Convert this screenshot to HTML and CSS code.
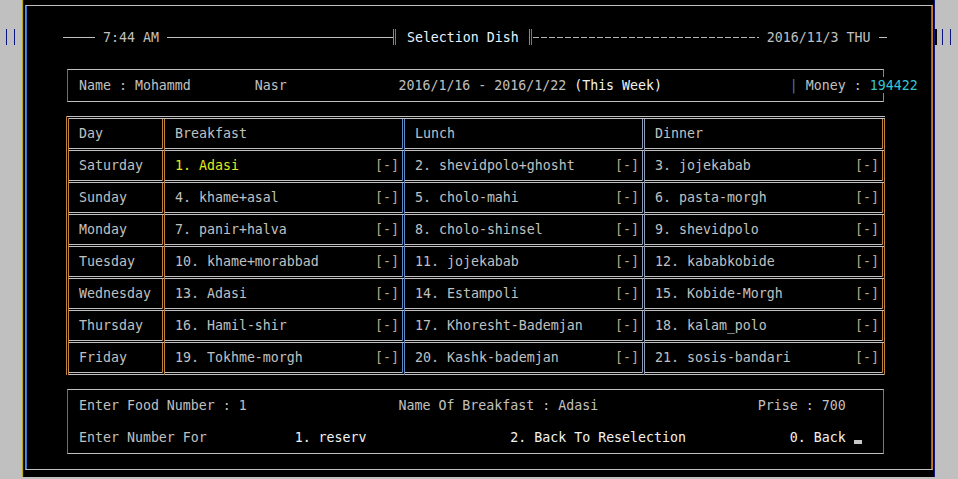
FILE: index.html
```html
<!DOCTYPE html>
<html>
<head>
<meta charset="utf-8">
<title>Selection Dish</title>
<link rel="stylesheet" href="styles.css">
</head>
<body>
<div class="screen">
  <div class="gutter gutter-left"><i class="mark"></i><i class="mark"></i></div>
  <div class="console">
    <div class="frame">
      <div class="title-row">
        <span class="rule w32"></span>
        <span class="t time">7:44 AM</span>
        <span class="rule w226"></span>
        <span class="dbl"></span>
        <span class="t title">Selection Dish</span>
        <span class="dbl dbl-right"></span>
        <span class="dash"></span>
        <span class="t date">2016/11/3 THU</span>
        <span class="rule w8"></span>
      </div>
      <div class="namebox"><div class="line">Name : Mohammd        Nasr              2016/1/16 - 2016/1/22 <span class="hi">(This Week)</span>                <span class="bar">|</span> Money : <span class="money">194422</span></div></div>
      <div class="menu">
        <div class="cell c-day">Day</div>
        <div class="cell c-b">Breakfast</div>
        <div class="cell c-l">Lunch</div>
        <div class="cell c-d">Dinner</div>

        <div class="cell c-day">Saturday</div>
        <div class="cell c-b"><span class="sel">1. Adasi</span><span class="mk">[-]</span></div>
        <div class="cell c-l"><span>2. shevidpolo+ghosht</span><span class="mk">[-]</span></div>
        <div class="cell c-d"><span>3. jojekabab</span><span class="mk">[-]</span></div>

        <div class="cell c-day">Sunday</div>
        <div class="cell c-b"><span>4. khame+asal</span><span class="mk">[-]</span></div>
        <div class="cell c-l"><span>5. cholo-mahi</span><span class="mk">[-]</span></div>
        <div class="cell c-d"><span>6. pasta-morgh</span><span class="mk">[-]</span></div>

        <div class="cell c-day">Monday</div>
        <div class="cell c-b"><span>7. panir+halva</span><span class="mk">[-]</span></div>
        <div class="cell c-l"><span>8. cholo-shinsel</span><span class="mk">[-]</span></div>
        <div class="cell c-d"><span>9. shevidpolo</span><span class="mk">[-]</span></div>

        <div class="cell c-day">Tuesday</div>
        <div class="cell c-b"><span>10. khame+morabbad</span><span class="mk">[-]</span></div>
        <div class="cell c-l"><span>11. jojekabab</span><span class="mk">[-]</span></div>
        <div class="cell c-d"><span>12. kababkobide</span><span class="mk">[-]</span></div>

        <div class="cell c-day">Wednesday</div>
        <div class="cell c-b"><span>13. Adasi</span><span class="mk">[-]</span></div>
        <div class="cell c-l"><span>14. Estampoli</span><span class="mk">[-]</span></div>
        <div class="cell c-d"><span>15. Kobide-Morgh</span><span class="mk">[-]</span></div>

        <div class="cell c-day">Thursday</div>
        <div class="cell c-b"><span>16. Hamil-shir</span><span class="mk">[-]</span></div>
        <div class="cell c-l"><span>17. Khoresht-Bademjan</span><span class="mk">[-]</span></div>
        <div class="cell c-d"><span>18. kalam_polo</span><span class="mk">[-]</span></div>

        <div class="cell c-day">Friday</div>
        <div class="cell c-b"><span>19. Tokhme-morgh</span><span class="mk">[-]</span></div>
        <div class="cell c-l"><span>20. Kashk-bademjan</span><span class="mk">[-]</span></div>
        <div class="cell c-d"><span>21. sosis-bandari</span><span class="mk">[-]</span></div>
      </div>
      <div class="entry">
        <div class="line">Enter Food Number : 1                   Name Of Breakfast : Adasi                    Prise : 700</div>
        <div class="line line-2">Enter Number For           <span class="hi">1. reserv</span>                  <span class="hi">2. Back To Reselection</span>             <span class="hi">0. Back</span> <span class="cursor"></span></div>
      </div>
    </div>
  </div>
  <div class="gutter gutter-right"><i class="block"></i><i class="mark"></i><i class="mark"></i></div>
</div>
</body>
</html>
```
FILE: styles.css
```css
html, body {
  margin: 0;
  padding: 0;
}

body {
  width: 958px;
  height: 479px;
  overflow: hidden;
  background: #c0c0c0;
  font-family: "DejaVu Sans Mono", "Liberation Mono", monospace;
  font-size: 13.288px;
  line-height: 17px;
  color: #c0c0c0;
}

.screen {
  display: flex;
  height: 477px;
}

/* side gutters with the small "||" marks */
.gutter {
  display: flex;
  height: 16px;
  margin-top: 29px;
}

.gutter-left {
  width: 22px;
}

.gutter-right {
  width: 23px;
}

.mark {
  display: block;
  width: 1px;
  height: 16px;
  background: #0a1482;
}

.gutter-left .mark:first-child {
  margin-left: 6px;
}

.gutter-left .mark + .mark {
  margin-left: 7px;
}

.gutter-right .block {
  display: block;
  width: 2px;
  height: 16px;
  background: #000;
}

.gutter-right .block + .mark {
  margin-left: 5px;
}

.gutter-right .mark + .mark {
  margin-left: 7px;
}

/* black console window */
.console {
  width: 911px;
  background: #000;
  border-left: 1px solid #b8a818;
  border-right: 1px solid #10187e;
  box-shadow: inset 1px 0 0 #5a0000;
  padding-top: 5px;
}

.frame {
  box-sizing: border-box;
  margin-left: 2px;
  width: 908px;
  height: 465px;
  border-top: 1px solid #c0c0c0;
  border-bottom: 1px solid #c0c0c0;
  border-left: 1px solid #c47a30;
  border-right: 1px solid #c47a30;
  box-shadow: inset 1px 0 0 #3a78d0, inset -1px 0 0 #3a78d0;
  padding-top: 23px;
}

/* title line */
.title-row {
  display: flex;
  height: 16px;
  padding-left: 37px;
  white-space: pre;
}

.rule {
  height: 16px;
  background: linear-gradient(transparent 8px, #c0c0c0 8px 9px, transparent 9px);
}

.w32 { width: 32px; }
.w226 { width: 226px; margin-left: 8px; }
.w8 { width: 8px; margin-left: 8px; }

.time { margin-left: 8px; }
.date { margin-left: 8px; }

.title {
  margin-left: 10px;
  color: #e8f2ff;
}

.dbl {
  width: 4px;
  height: 16px;
  background: linear-gradient(to right, #c47a30 0 1px, transparent 1px 2px, #4a82d0 2px 3px, transparent 3px);
}

.dbl-right {
  margin-left: 10px;
}

.dash {
  width: 226px;
  height: 16px;
  background-image: repeating-linear-gradient(to right, #b4b4b4 0 6px, transparent 6px 8px);
  background-size: 100% 1px;
  background-position: 0 8px;
  background-repeat: no-repeat;
}

/* name / week / money box */
.namebox {
  box-sizing: border-box;
  margin: 24px 0 0 41px;
  width: 817px;
  height: 33px;
  border: 1px solid #c0c0c0;
  border-left-color: #3a78d0;
  border-right-color: #c47a30;
  padding: 7px 0 0 11px;
  white-space: pre;
}

.hi {
  color: #f2f2f2;
}

.bar {
  color: #3a7ad4;
}

.money {
  display: inline-block;
  height: 16px;
  vertical-align: top;
  background: #000;
  color: #36c6d2;
}

/* weekly menu table */
.menu {
  box-sizing: border-box;
  margin: 14px 0 0 40px;
  width: 819px;
  display: grid;
  grid-template-columns: 96px 240px 240px 240px;
  grid-auto-rows: 32px;
  border-top: 3px double #c0c0c0;
  border-left: 3px double #c0843c;
}

.cell {
  box-sizing: border-box;
  display: flex;
  justify-content: space-between;
  padding: 6px 3px 0 10px;
  border-bottom: 3px double #c0c0c0;
  border-right: 3px double #c0843c;
  white-space: pre;
}

.c-b { border-right-color: #5e8ac6; }
.c-l { border-right-color: #8c9cb6; }
.c-d { border-right-color: #c0843c; }

.sel {
  color: #e2e81e;
}

.mk {
  color: #b8a890;
}

/* entry box */
.entry {
  box-sizing: border-box;
  margin: 14px 0 0 41px;
  width: 817px;
  height: 65px;
  border: 1px solid #c0c0c0;
  border-left-color: #3a78d0;
  border-right-color: #4a80c8;
  padding: 7px 0 0 11px;
}

.line {
  white-space: pre;
}

.line-2 {
  margin-top: 15px;
}

.cursor {
  display: inline-block;
  width: 8px;
  height: 16px;
  vertical-align: top;
  background: linear-gradient(transparent 11px, #c8c8c8 11px 15px, transparent 15px);
}
```
